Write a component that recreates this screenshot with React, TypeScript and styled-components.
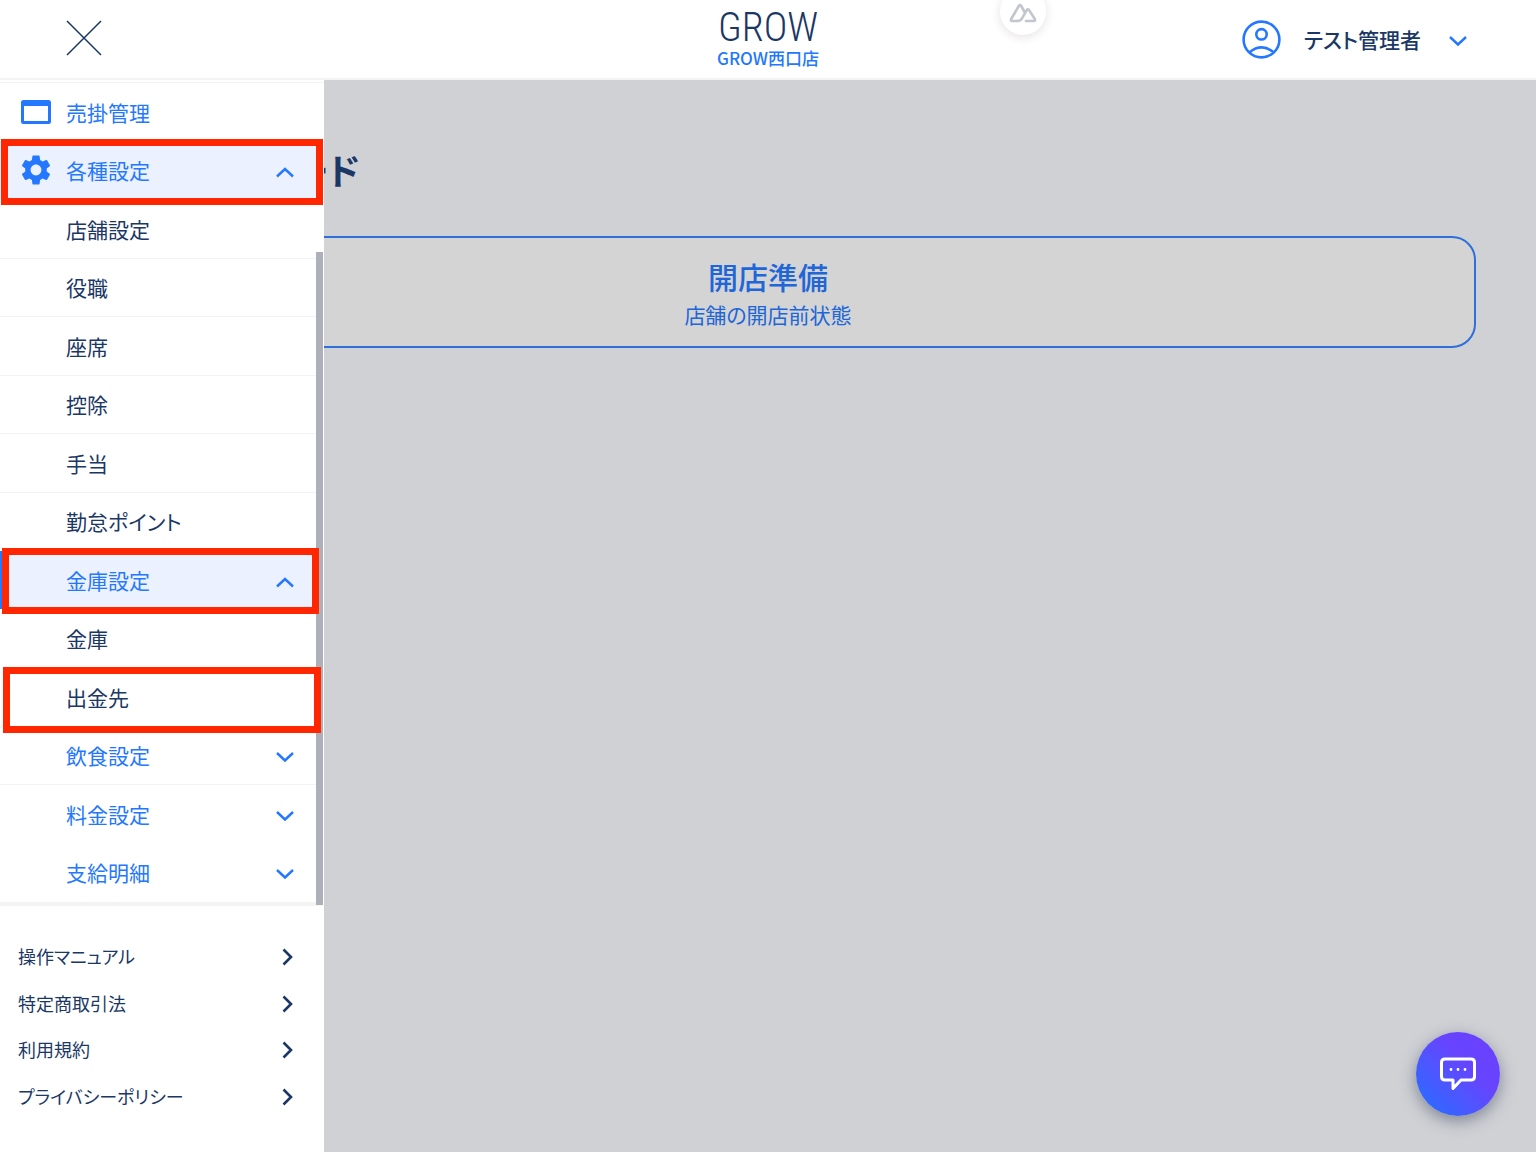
import React from "react";
import styled, { createGlobalStyle } from "styled-components";
import { MdSettings } from "react-icons/md";

const navy = "#1b3766";
const blue = "#2478ff";
const red = "#ff2600";
const line = "#f3f3f3";

const GlobalStyle = createGlobalStyle`
  *, *::before, *::after { box-sizing: border-box; }
  body {
    margin: 0;
    color: ${navy};
    font-family: "Noto Sans CJK JP", "Noto Sans", sans-serif;
    font-feature-settings: "palt";
  }
  button {
    margin: 0;
    padding: 0;
    border: 0;
    background: none;
    color: inherit;
    font: inherit;
    font-feature-settings: inherit;
    cursor: pointer;
  }
  a { color: inherit; text-decoration: none; }
  ul { margin: 0; padding: 0; list-style: none; }
  h1 { margin: 0; }
  svg { display: block; flex: none; }
`;

const Page = styled.div`
  position: relative;
  display: flex;
  flex-direction: column;
  height: 100vh;
  overflow: hidden;
`;

const Header = styled.header`
  position: relative;
  display: grid;
  grid-template-columns: 1fr auto 1fr;
  flex: none;
  height: 80px;
  background: #fff;
  border-bottom: 2px solid ${line};
`;

const CloseButton = styled.button`
  align-self: center;
  justify-self: start;
  padding: 0 66px 2px;
`;

const Brand = styled.a`
  display: flex;
  flex-direction: column;
  align-items: center;
  padding-top: 8px;
`;

const Logo = styled.span`
  font-family: "Roboto Condensed", Roboto, sans-serif;
  font-size: 40px;
  font-weight: 300;
  line-height: 40px;
`;

const ShopName = styled.span`
  color: ${blue};
  font-size: 17px;
  font-weight: 500;
  line-height: 20px;
`;

const UserButton = styled.button`
  display: flex;
  align-items: center;
  justify-self: end;
  padding-right: 69px;
  font-size: 21px;
  font-weight: 500;
  line-height: 32px;
`;

const UserName = styled.span`
  margin: 0 28px 0 23px;
`;

const DevTab = styled.button`
  position: absolute;
  top: -12px;
  left: 1000px;
  display: flex;
  align-items: flex-end;
  justify-content: center;
  width: 46px;
  height: 47px;
  padding-bottom: 12px;
  border-radius: 23px;
  background: #fff;
  box-shadow: 0 2px 10px rgba(70, 50, 40, 0.14);
`;

const Body = styled.div`
  position: relative;
  flex: 1;
  min-height: 0;
`;

const Main = styled.main`
  height: 100%;
  padding: 61px 60px;
  background: #cfd1d5;
`;

const Title = styled.h1`
  padding-left: 68px;
  font-size: 36px;
  font-weight: 700;
  line-height: 56px;
`;

const StatusCard = styled.button`
  display: flex;
  flex-direction: column;
  align-items: center;
  width: 100%;
  margin-top: 39px;
  padding: 16px 20px;
  border: 2px solid #2f6fdb;
  border-radius: 24px;
  background: #d4d4d4;
  color: #2066d8;
`;

const StatusName = styled.span`
  font-size: 30px;
  font-weight: 500;
  line-height: 44px;
`;

const StatusNote = styled.span`
  font-size: 21px;
  line-height: 32px;
`;

const Drawer = styled.aside`
  position: absolute;
  top: 0;
  bottom: 0;
  left: 0;
  display: flex;
  flex-direction: column;
  width: 324px;
  background: #fff;
`;

const ScrollArea = styled.div`
  display: flex;
  flex: 1;
  min-height: 0;
  margin-top: 2px;
  border-top: 1px solid ${line};
  border-bottom: 1px solid ${line};
`;

const Menu = styled.ul`
  display: grid;
  flex: 1;
  grid-auto-rows: 1fr;
  border-bottom: 3px solid ${line};
`;

const MenuItem = styled.li<{ $divider?: boolean }>`
  position: relative;
  display: grid;
  border-bottom: 1px solid ${(p) => (p.$divider ? line : "transparent")};
`;

const MenuButton = styled.button<{ $tone: string; $open?: boolean; $current?: boolean }>`
  display: grid;
  grid-template-columns: 36px 1fr 18px;
  align-items: center;
  column-gap: 12px;
  padding: 0 22px 0 18px;
  background: ${(p) => (p.$open ? "#ebf1fe" : "transparent")};
  box-shadow: ${(p) => (p.$current ? `inset 3px 0 ${blue}` : "none")};
  color: ${(p) => p.$tone};
  font-size: 21px;
  line-height: 32px;
  text-align: left;
`;

const Marker = styled.span<{ $left: number; $top: number; $width: number }>`
  position: absolute;
  z-index: 1;
  top: ${(p) => p.$top}px;
  left: ${(p) => p.$left}px;
  width: ${(p) => p.$width}px;
  height: 66px;
  border: 7px solid ${red};
  pointer-events: none;
`;

const Track = styled.div`
  display: flex;
  width: 8px;
  padding: 169px 1px 0 0;
`;

const Thumb = styled.div`
  flex: 1;
  background: #adb0b8;
`;

const FooterMenu = styled.ul`
  display: grid;
  flex: 0 0 246px;
  grid-auto-rows: 1fr;
  padding: 28px 0 32px;
`;

const FooterLink = styled.a`
  display: flex;
  align-items: center;
  justify-content: space-between;
  height: 100%;
  padding: 0 31px 0 18px;
`;

const FooterLabel = styled.span`
  padding-bottom: 2px;
  font-size: 18px;
  line-height: 28px;
`;

const ChatButton = styled.button`
  position: absolute;
  right: 36px;
  bottom: 36px;
  display: grid;
  place-items: center;
  width: 84px;
  height: 84px;
  border-radius: 50%;
  background: linear-gradient(45deg, #2a6cff 8%, #4a58ff 35%, #6744ff 62%, #6a40ff);
  box-shadow: 0 5px 16px rgba(50, 60, 85, 0.5);
`;

function Chevron({ up = false }: { up?: boolean }) {
  return (
    <svg width="18" height="16" viewBox="0 0 18 16" fill="none" stroke={blue} strokeWidth="2.4" aria-hidden="true">
      <path d={up ? "M1 14.5 9 7 17 14.5" : "M1 6 9 13.5 17 6"} />
    </svg>
  );
}

function Arrow() {
  return (
    <svg width="11" height="18" viewBox="0 0 11 18" fill="none" stroke={navy} strokeWidth="2.6" aria-hidden="true">
      <path d="M1.5 1.5 9 9 1.5 16.5" />
    </svg>
  );
}

function WindowIcon() {
  return (
    <svg width="36" height="36" viewBox="0 0 36 36" fill="currentColor" aria-hidden="true">
      <path
        fillRule="evenodd"
        d="M5.5 6H30.5A2.5 2.5 0 0 1 33 8.5V27.5A2.5 2.5 0 0 1 30.5 30H5.5A2.5 2.5 0 0 1 3 27.5V8.5A2.5 2.5 0 0 1 5.5 6ZM6 12V27H30V12Z"
      />
    </svg>
  );
}

type Item = {
  label: string;
  icon?: "window" | "gear";
  group?: boolean;
  open?: boolean;
  current?: boolean;
  divider?: boolean;
  marker?: { left: number; top: number; width: number };
};

const items: Item[] = [
  { label: "売掛管理", icon: "window" },
  { label: "各種設定", icon: "gear", group: true, open: true, marker: { left: 1, top: -3, width: 322 } },
  { label: "店舗設定", divider: true },
  { label: "役職", divider: true },
  { label: "座席", divider: true },
  { label: "控除", divider: true },
  { label: "手当", divider: true },
  { label: "勤怠ポイント" },
  { label: "金庫設定", group: true, open: true, current: true, marker: { left: 2, top: -3, width: 317 } },
  { label: "金庫" },
  { label: "出金先", divider: true, marker: { left: 3, top: -1, width: 318 } },
  { label: "飲食設定", group: true, divider: true },
  { label: "料金設定", group: true },
  { label: "支給明細", group: true },
];

const footerItems = ["操作マニュアル", "特定商取引法", "利用規約", "プライバシーポリシー"];

export default function App() {
  return (
    <>
      <GlobalStyle />
      <Page>
        <Header>
          <CloseButton aria-label="メニューを閉じる">
            <svg width="36" height="36" viewBox="0 0 36 36" fill="none" stroke={navy} strokeWidth="1.5">
              <path d="M1 1 35 35M35 1 1 35" />
            </svg>
          </CloseButton>
          <Brand href="#">
            <Logo>GROW</Logo>
            <ShopName>GROW西口店</ShopName>
          </Brand>
          <UserButton>
            <svg width="39" height="39" viewBox="0 0 39 39" fill="none" stroke={blue} strokeWidth="2.6" aria-hidden="true">
              <circle cx="19.5" cy="19.5" r="17.9" />
              <circle cx="19.5" cy="14.3" r="5.2" />
              <path d="M7.6 32.2Q19.5 22.6 31.4 32.2" />
            </svg>
            <UserName>テスト管理者</UserName>
            <Chevron />
          </UserButton>
          <DevTab aria-label="DevTools">
            <svg width="28" height="20" viewBox="0 0 28 20" fill="none" stroke="#c3c6cd" strokeWidth="2.6" strokeLinejoin="round" strokeLinecap="round">
              <path d="M8.5 18H3.2Q1.2 18 2.2 16L9.8 3Q11 1.2 12.2 3L14.2 6.5" />
              <path d="M8.5 18Q11.5 18 13 15.4L17.8 7.2Q19 5.4 20.2 7.2L25.8 16Q26.8 18 24.8 18H17" />
              <path d="M14.2 6.5 15.5 9.2" />
            </svg>
          </DevTab>
        </Header>

        <Body>
          <Main>
            <Title>ダッシュボード</Title>
            <StatusCard>
              <StatusName>開店準備</StatusName>
              <StatusNote>店舗の開店前状態</StatusNote>
            </StatusCard>
          </Main>

          <Drawer>
            <ScrollArea>
              <Menu>
                {items.map((item) => (
                  <MenuItem key={item.label} $divider={item.divider}>
                    <MenuButton
                      $tone={item.icon || item.group ? blue : navy}
                      $open={item.open}
                      $current={item.current}
                      aria-expanded={item.group ? !!item.open : undefined}
                    >
                      <span>
                        {item.icon === "window" && <WindowIcon />}
                        {item.icon === "gear" && <MdSettings size={36} />}
                      </span>
                      <span>{item.label}</span>
                      {item.group && <Chevron up={item.open} />}
                    </MenuButton>
                    {item.marker && (
                      <Marker $left={item.marker.left} $top={item.marker.top} $width={item.marker.width} />
                    )}
                  </MenuItem>
                ))}
              </Menu>
              <Track>
                <Thumb />
              </Track>
            </ScrollArea>
            <FooterMenu>
              {footerItems.map((label) => (
                <li key={label}>
                  <FooterLink href="#">
                    <FooterLabel>{label}</FooterLabel>
                    <Arrow />
                  </FooterLink>
                </li>
              ))}
            </FooterMenu>
          </Drawer>
        </Body>

        <ChatButton aria-label="チャット">
          <svg width="38" height="36" viewBox="0 0 38 36" fill="none" stroke="#fff" strokeWidth="3" strokeLinejoin="round" aria-hidden="true">
            <path d="M6 3H32Q35.5 3 35.5 6.5V20.5Q35.5 24 32 24H22L14 32.5V24H6Q2.5 24 2.5 20.5V6.5Q2.5 3 6 3Z" />
            <path d="M12 13.5h.01M19 13.5h.01M26 13.5h.01" strokeLinecap="round" strokeWidth="2.8" />
          </svg>
        </ChatButton>
      </Page>
    </>
  );
}
